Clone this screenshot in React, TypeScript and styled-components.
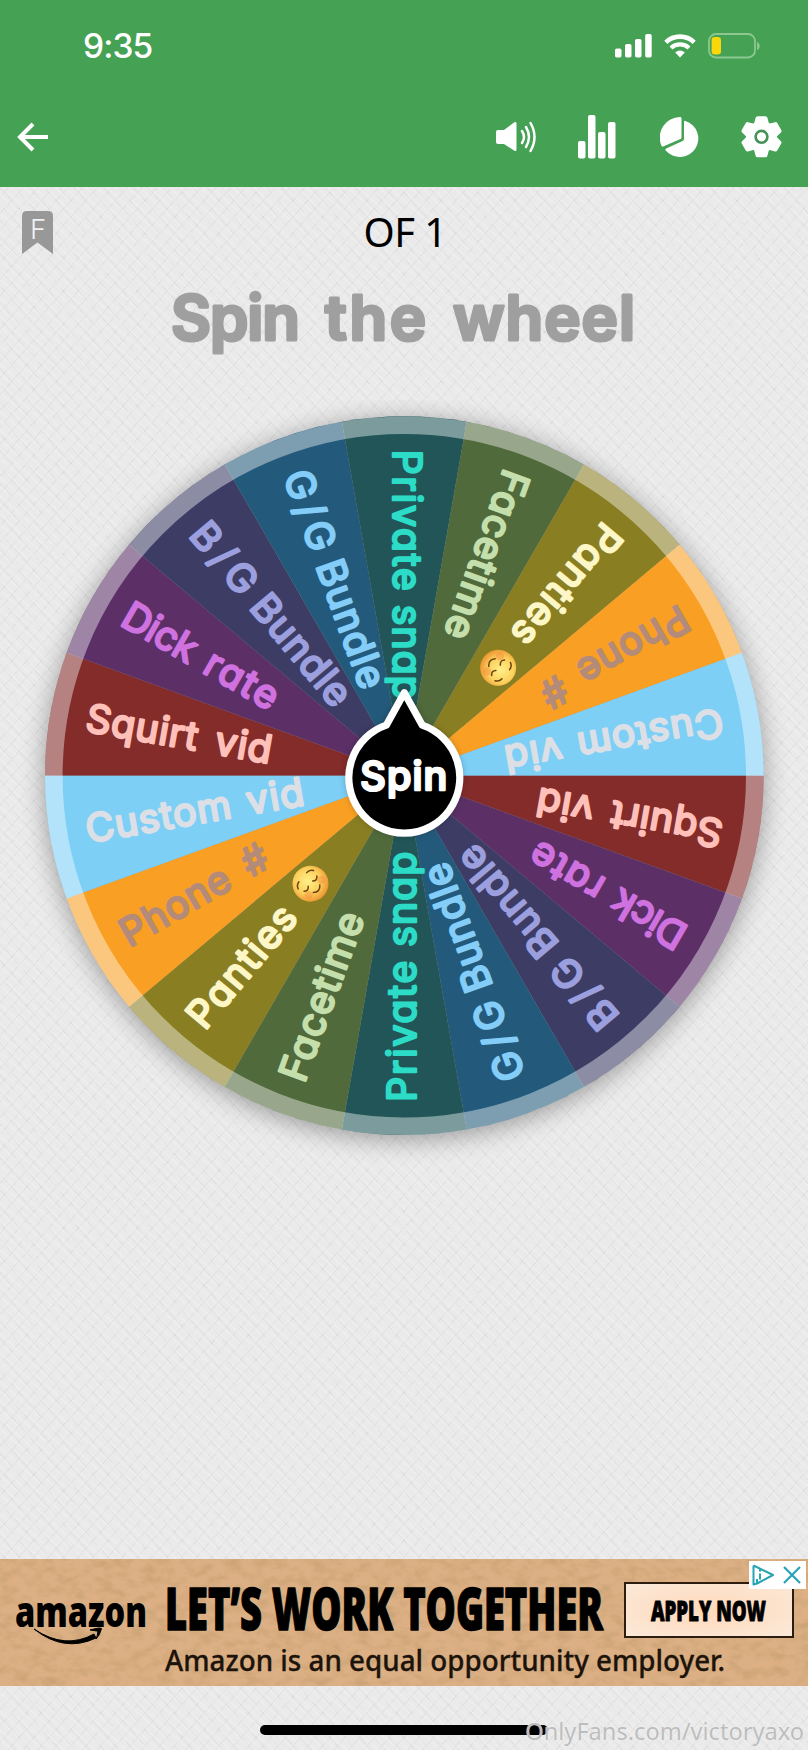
import React from 'react';
import styled, { createGlobalStyle } from 'styled-components';

const Global = createGlobalStyle`
  * { box-sizing: border-box; }
  body { margin: 0; background: #e9e9e9; }
`;

const Screen = styled.div`
  width: 808px;
  height: 1750px;
  display: flex;
  flex-direction: column;
  overflow: hidden;
  position: relative;
  font-family: Inter, sans-serif;
  background:
    repeating-linear-gradient(48deg, rgba(0,0,0,0.034) 0 1px, transparent 1px 11px),
    repeating-linear-gradient(-48deg, rgba(0,0,0,0.034) 0 1px, transparent 1px 11px),
    repeating-linear-gradient(42deg, rgba(255,255,255,0.14) 0 2px, transparent 2px 7px),
    #eaeaea;
`;

const Header = styled.header`
  height: 187px;
  flex: none;
  background: #45a154;
  color: #fff;
`;

const StatusBar = styled.div`
  height: 92px;
  padding: 0 48px 0 83px;
  display: flex;
  align-items: center;
  justify-content: space-between;
`;

const Clock = styled.span`
  font: 500 33.5px/40px Inter, sans-serif;
  letter-spacing: -0.9px;
`;

const StatusIcons = styled.div`
  display: flex;
  align-items: center;
  gap: 12px;
`;

const Toolbar = styled.nav`
  height: 90px;
  padding: 0 26px 0 16px;
  display: flex;
  align-items: center;
  justify-content: space-between;
`;

const Actions = styled.div`
  display: flex;
  align-items: center;
`;

const Action = styled.button<{ $gap?: number }>`
  border: 0;
  padding: 0;
  background: none;
  display: block;
  line-height: 0;
  margin-left: ${p => p.$gap ?? 0}px;
`;

const TitleRow = styled.div`
  height: 91px;
  flex: none;
  padding: 0 22px;
  display: grid;
  grid-template-columns: 31px 1fr 31px;
  align-items: center;
`;

const Title = styled.h1`
  margin: 0;
  padding: 0 0 1px 2px;
  text-align: center;
  color: #000;
  font: 400 40px/46px "Noto Sans", sans-serif;
  letter-spacing: -0.6px;
`;

const Prompt = styled.div`
  height: 92px;
  flex: none;
  line-height: 0;
`;

const WheelArea = styled.main`
  height: 812px;
  flex: none;
  padding-top: 30px;
  line-height: 0;
`;

const Spacer = styled.div`
  flex: 1;
`;

const Ad = styled.section`
  height: 127px;
  flex: none;
  position: relative;
  display: flex;
  align-items: flex-start;
  overflow: hidden;
  background: #dcb084;
`;

const Paper = styled.svg`
  position: absolute;
  inset: 0;
`;

const Brand = styled.div`
  width: 165px;
  padding: 34px 0 0 14px;
  line-height: 0;
  position: relative;
`;

const Copy = styled.div`
  width: 459px;
  padding-top: 11px;
  display: flex;
  flex-direction: column;
  line-height: 0;
  position: relative;
`;

const Apply = styled.button`
  width: 170px;
  height: 56px;
  margin: 23px 0 0 0;
  padding: 0;
  border: 2px solid #2c1d10;
  background: radial-gradient(#ffd9ba, #fbe9d9);
  display: flex;
  align-items: center;
  justify-content: center;
  position: relative;
`;

const AdChoices = styled.div`
  position: absolute;
  top: 2px;
  right: 2px;
  width: 57px;
  height: 28px;
  background: #fff;
  display: flex;
  align-items: center;
  justify-content: space-between;
  padding: 0 5px 0 3px;
`;

const Footer = styled.footer`
  height: 64px;
  flex: none;
  padding-top: 39px;
  display: flex;
  justify-content: center;
`;

const HomeBar = styled.div`
  width: 288px;
  height: 10px;
  border-radius: 5px;
  background: #000;
`;

const Watermark = styled.div`
  position: absolute;
  right: 4px;
  bottom: 2px;
  font: 400 23.6px/34px "Noto Sans", sans-serif;
  color: #bdbdbd;
  text-shadow: 0 0 1px #fff;
`;

type FitProps = {
  x: number; y: number; size: number; length: number; weight?: number;
  color?: string; stroke?: number; family?: string; glyphs?: boolean;
  children: string;
};

const Glyphs = styled.text`
  font-feature-settings: "cv11";
  stroke-linejoin: round;
  stroke-linecap: round;
`;

const FitText = ({ x, y, size, length, weight = 400, color = '#000', stroke = 0, family = 'Inter, sans-serif', glyphs, children }: FitProps) => (
  <Glyphs
    x={x} y={y} fontSize={size} fontWeight={weight} fontFamily={family} fill={color}
    stroke={stroke ? color : 'none'} strokeWidth={stroke}
    textLength={length} lengthAdjust={glyphs ? 'spacingAndGlyphs' : 'spacing'}
  >{children}</Glyphs>
);

const CX = 404.3;
const CY = 375.7;
const R = 359.3;

type Word = [text: string, from: number, to: number];
type Slice = { fill: string; ink: string; words: Word[]; emoji?: boolean };

const slices: Slice[] = [
  { fill: '#832c2a', ink: '#ffc0ba', words: [['Squirt', 323, 210], ['vid', 192, 135]] },
  { fill: '#5c3067', ink: '#cf72e0', words: [['Dick', 323, 243], ['rate', 228, 149]] },
  { fill: '#3d3c65', ink: '#9b9fde', words: [['B/G', 323, 242], ['Bundle', 229, 96]] },
  { fill: '#235a7b', ink: '#84cdf8', words: [['G/G', 323, 240], ['Bundle', 228, 94]] },
  { fill: '#215558', ink: '#2cdcc6', words: [['Private', 326, 185], ['snap', 171, 76]] },
  { fill: '#506a3c', ink: '#c5dfac', words: [['Facetime', 324, 147]] },
  { fill: '#8a7e23', ink: '#fdf6c6', words: [['Panties', 324, 177]], emoji: true },
  { fill: '#f9a024', ink: '#b38b78', words: [['Phone', 324, 203], ['#', 184, 158]] },
  { fill: '#7dcff6', ink: '#dce0e6', words: [['Custom', 323, 176], ['vid', 160, 102]] },
];

const wedge = (from: number) => {
  const p = (deg: number) => {
    const t = (deg * Math.PI) / 180;
    return `${-R * Math.cos(t)} ${-R * Math.sin(t)}`;
  };
  return `M0 0L${p(from)}A${R} ${R} 0 0 1 ${p(from + 20)}Z`;
};

const Relieved = () => (
  <g transform="translate(-143 -2.5)">
    <circle r="18" fill="url(#face)" />
    <circle cx="-10" cy="6" r="4" fill="#f58442" opacity=".4" />
    <circle cx="10" cy="6" r="4" fill="#f58442" opacity=".4" />
    <path d="M-12-6q2-4 6-4M6-10q4 0 6 4M-10 0q3 3.500 6.500 0M3.500 0q3 3.500 6.500 0M-5 8q5 5 10 0" fill="none" stroke="#6d4210" strokeWidth="1.500" strokeLinecap="round" />
  </g>
);

const Wheel = () => (
  <svg width="808" height="780" viewBox="0 0 808 780">
    <defs>
      <radialGradient id="face" cx=".5" cy=".4" r=".6">
        <stop offset="0" stopColor="#fff08a" />
        <stop offset=".6" stopColor="#fbd05b" />
        <stop offset="1" stopColor="#ec9330" />
      </radialGradient>
      <filter id="soft" x="-20%" y="-20%" width="140%" height="140%"><feGaussianBlur stdDeviation="12" /></filter>
      <filter id="near" x="-20%" y="-20%" width="140%" height="140%"><feGaussianBlur stdDeviation="5" /></filter>
    </defs>
    <circle cx={CX} cy={CY + 4} r={R + 1} fill="#000" opacity=".33" filter="url(#soft)" />
    <g transform={`translate(${CX} ${CY})`}>
      {[0, 180].map(turn => (
        <g key={turn} transform={`rotate(${turn})`}>
          {slices.map((s, i) => <path key={s.fill} d={wedge(i * 20)} fill={s.fill} />)}
        </g>
      ))}
      <circle r={R - 8.8} fill="none" stroke="#fff" strokeOpacity=".41" strokeWidth="17.6" />
      {[0, 180].map(turn => (
        <g key={turn} transform={`rotate(${turn})`}>
          {slices.map((s, i) => (
            <g key={s.fill} transform={`rotate(${i * 20 + 10})`}>
              {s.words.map(([text, from, to]) => (
                <FitText key={text} x={-from} y={11.5} size={39} length={from - to} color={s.ink} stroke={2.4}>{text}</FitText>
              ))}
              {s.emoji && <Relieved />}
            </g>
          ))}
        </g>
      ))}
      <path d="M0-84L18-50.500A55.500 55.500 0 1 1-18-50.500Z" fill="#000" opacity=".5" filter="url(#near)" />
      <path d="M0-83L18-50.500A55.500 55.500 0 1 1-18-50.500Z" fill="#000" stroke="#fff" strokeWidth="7.200" strokeLinejoin="round" />
      <FitText x={-44} y={14.500} size={39.500} length={87} weight={500} color="#fff" stroke={2.500}>Spin</FitText>
    </g>
  </svg>
);

const Signal = () => (
  <svg width="37" height="24" viewBox="0 0 37 24" fill="#fff">
    <rect x="0" y="14.500" width="6.500" height="9" rx="1.800" /><rect x="10" y="10" width="6.500" height="13.500" rx="1.800" />
    <rect x="20" y="5" width="6.500" height="18.500" rx="1.800" /><rect x="30.200" y="0" width="6.500" height="23.500" rx="1.800" />
  </svg>
);

const Wifi = () => (
  <svg width="32" height="24" viewBox="0 0 32 24" fill="none" stroke="#fff">
    <path d="M1.800 8.300a20.500 20.500 0 0 1 28.400 0" strokeWidth="4.600" />
    <path d="M7 14a13 13 0 0 1 18 0" strokeWidth="4.200" />
    <path d="M16 23.500l-4.800-5a7 7 0 0 1 9.600 0z" fill="#fff" stroke="none" />
  </svg>
);

const Battery = () => (
  <svg width="52" height="26" viewBox="0 0 52 26">
    <rect x="1" y="1" width="46" height="23.500" rx="7" fill="none" stroke="#8cc88f" strokeWidth="1.800" />
    <rect x="3.600" y="4" width="9.400" height="17.500" rx="3.200" fill="#fbd60a" />
    <path d="M49 9c3.600 1 3.600 7 0 8z" fill="#8cc88f" />
  </svg>
);

const BackIcon = () => (
  <svg width="33" height="30" viewBox="0 0 33 30" fill="none" stroke="#fff" strokeWidth="4">
    <path d="M32 15H4M17 2L4 15L17 28" />
  </svg>
);

const SoundIcon = () => (
  <svg width="42" height="34" viewBox="0 0 42 34" fill="none" stroke="#fff" strokeWidth="2.500" strokeLinecap="round">
    <path d="M2 10h6L18 2.500q2.500-1.500 2.500 1v26q0 2.500-2.500 1L8 24H2q-2 0-2-2V12q0-2 2-2z" fill="#fff" stroke="none" />
    <path d="M26 11q4 6 0 12M30 7q6 10 0 20M34.500 3q8 14 0 28" />
  </svg>
);

const BarsIcon = () => (
  <svg width="38" height="44" viewBox="0 0 38 44" fill="#fff">
    <rect x="0" y="26" width="7.500" height="17.500" rx="2" /><rect x="10" y="0" width="7.500" height="43.500" rx="2" />
    <rect x="20" y="17" width="7.500" height="26.500" rx="2" /><rect x="30" y="7" width="7.500" height="36.500" rx="2" />
  </svg>
);

const PieIcon = () => (
  <svg width="40" height="41" viewBox="0 0 40 41" fill="#fff">
    <path d="M21.500 1.500Q21.500 0 20 .1A20.500 20.500 0 0 0 1.300 28.500Q1.800 30 3.200 29.400L20.500 22Q21.500 21.500 21.500 20.500Z" />
    <path d="M24 5Q24 3.600 25.400 3.900A18.500 18.500 0 1 1 5.700 33.500Q4.800 32 6.200 31.400L22.600 24Q24 23.300 24 22Z" />
  </svg>
);

const GearIcon = () => (
  <svg width="41" height="42" viewBox="0 0 41 42">
    <g transform="translate(20.500 20.800)" fill="#fff">
      <circle r="15.500" />
      {[0, 60, 120].map(a => <path key={a} transform={`rotate(${a})`} d="M-4-20.500h8q1.500 0 1.900 1.500l1.600 6v26l-1.600 6q-.4 1.500-1.900 1.500h-8q-1.500 0-1.900-1.500l-1.600-6v-26l1.600-6q.4-1.500 1.900-1.500z" />)}
      <circle r="5.900" fill="#fff" stroke="#459158" strokeWidth="2.600" />
    </g>
  </svg>
);

const Bookmark = () => (
  <svg width="31" height="44" viewBox="0 0 31 44">
    <path d="M5 0h21q5 0 5 5v38l-15.500-11.500L0 43V5q0-5 5-5z" fill="#989898" />
    <text x="16" y="28" textAnchor="middle" fontFamily="Inter, sans-serif" fontSize="27.500" fontWeight="300" fill="#f2f2f2">F</text>
  </svg>
);

const AmazonLogo = () => (
  <svg width="134" height="54" viewBox="0 0 134 54" overflow="visible">
    <FitText x={1} y={33.500} size={43} length={132} weight={800} family='"Open Sans", sans-serif' glyphs>amazon</FitText>
    <path d="M20 36Q51 57 80 41l2 4Q50 60 20 36Z" stroke="#000" />
    <path d="M76 37q14-4 11 0-1 5-5 9 3-8 1-8z" stroke="#000" />
  </svg>
);

export default function App() {
  return (
    <Screen>
      <Global />
      <Header>
        <StatusBar>
          <Clock>9:35</Clock>
          <StatusIcons><Signal /><Wifi /><Battery /></StatusIcons>
        </StatusBar>
        <Toolbar>
          <Action aria-label="Back"><BackIcon /></Action>
          <Actions>
            <Action aria-label="Sound"><SoundIcon /></Action>
            <Action aria-label="Results" $gap={40}><BarsIcon /></Action>
            <Action aria-label="Wheels" $gap={44}><PieIcon /></Action>
            <Action aria-label="Settings" $gap={41}><GearIcon /></Action>
          </Actions>
        </Toolbar>
      </Header>
      <TitleRow>
        <Bookmark />
        <Title>OF 1</Title>
      </TitleRow>
      <Prompt>
        <svg width="808" height="92">
          <FitText x={171} y={62} size={61.500} length={129} weight={600} color="#9f9f9f" stroke={3.200}>Spin</FitText>
          <FitText x={325} y={62} size={61.500} length={101} weight={600} color="#9f9f9f" stroke={3.200}>the</FitText>
          <FitText x={453} y={62} size={61.500} length={182} weight={600} color="#9f9f9f" stroke={3.200}>wheel</FitText>
        </svg>
      </Prompt>
      <WheelArea>
        <Wheel />
      </WheelArea>
      <Spacer />
      <Ad>
        <Paper width="808" height="127">
          <filter id="grain">
            <feTurbulence type="fractalNoise" baseFrequency="0.07 0.11" numOctaves="5" seed="7" />
            <feColorMatrix values="0 0 0 0 .55  0 0 0 0 .34  0 0 0 0 .16  1.500 0 0 0 -.6" />
          </filter>
          <rect width="808" height="127" filter="url(#grain)" />
        </Paper>
        <Brand><AmazonLogo /></Brand>
        <Copy>
          <svg width="459" height="74">
            <FitText x={0} y={60} size={58} length={438} weight={800} stroke={1.400} family='"Open Sans", sans-serif' glyphs>LET’S WORK TOGETHER</FitText>
          </svg>
          <svg width="572" height="42" overflow="visible">
            <FitText x={0} y={27} size={28} length={560} weight={500} color="#1c130b" stroke={0.300} family='"Noto Sans", sans-serif' glyphs>Amazon is an equal opportunity employer.</FitText>
          </svg>
        </Copy>
        <Apply>
          <svg width="118" height="42">
            <FitText x={1} y={31.500} size={29} length={115} weight={800} stroke={1} family='"Open Sans", sans-serif' glyphs>APPLY NOW</FitText>
          </svg>
        </Apply>
        <AdChoices>
          <svg width="22" height="22" viewBox="0 0 22 22" fill="none" stroke="#27a3b4" strokeWidth="2" strokeLinejoin="round">
            <path d="M1.500 1.500L21 11L5 19.500M1.500 1.500V20.500L5 19.500V15M8 9.500v6M8 5.500v2" />
          </svg>
          <svg width="18" height="18" viewBox="0 0 18 18" stroke="#27a3b4" strokeWidth="2.200"><path d="M1 1L17 17M17 1L1 17" /></svg>
        </AdChoices>
      </Ad>
      <Footer><HomeBar /></Footer>
      <Watermark>OnlyFans.com/victoryaxo</Watermark>
    </Screen>
  );
}
